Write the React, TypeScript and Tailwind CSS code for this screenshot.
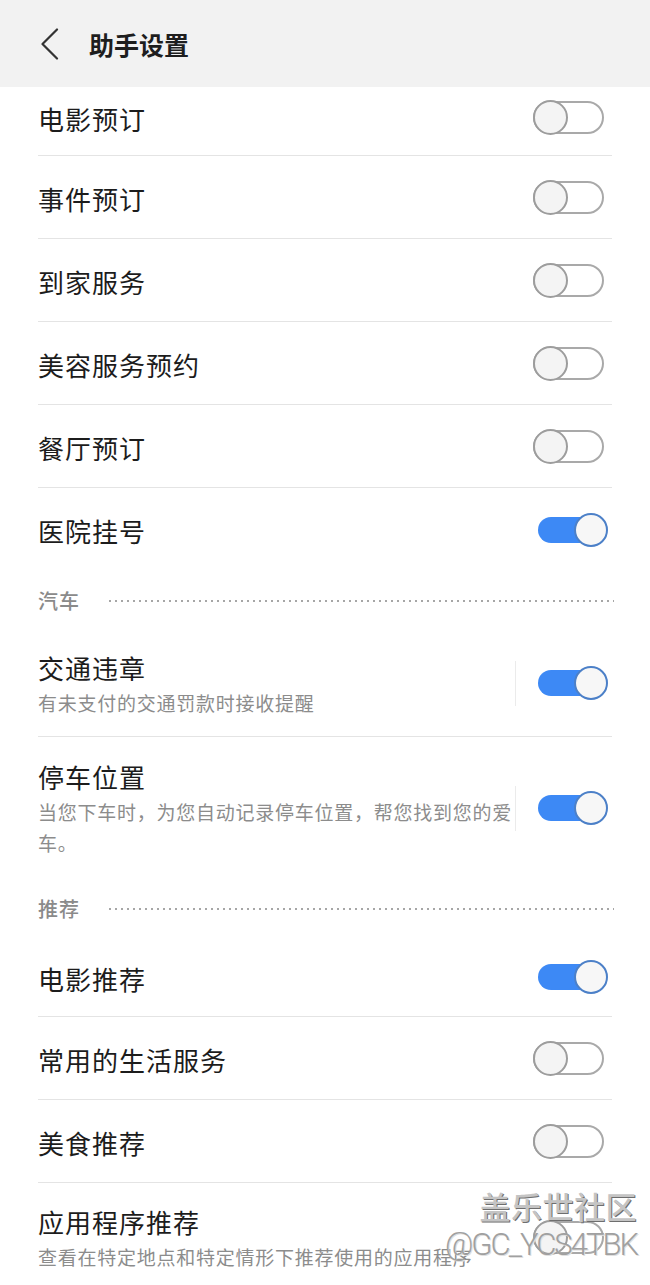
import React from "react";

const FONT = { fontFamily: '"Noto Sans CJK SC", "Noto Sans", sans-serif' };

function Toggle({ on }: { on: boolean }) {
  if (on) {
    return (
      <div className="relative w-[70px] h-[34px]">
        <div className="absolute left-0 top-[4px] w-[62px] h-[26px] rounded-full bg-[#3d89f5]" />
        <div className="absolute right-0 top-0 w-[34px] h-[34px] rounded-full border-2 border-[#4c80c8] bg-[#f7f7f7]" />
      </div>
    );
  }
  return (
    <div className="relative w-[71px] h-[35px]">
      <div className="absolute left-0 right-0 top-[1px] bottom-[1px] rounded-full border-2 border-[#a9a9a9] bg-white" />
      <div className="absolute left-0 top-0 w-[35px] h-[35px] rounded-full border-2 border-[#9d9d9d] bg-[#f4f4f4]" />
    </div>
  );
}

function ToggleBox({ on }: { on: boolean }) {
  return (
    <div className={`w-[75px] mr-[4px] flex ${on ? "justify-end" : "justify-start"}`}>
      <Toggle on={on} />
    </div>
  );
}

function Row({
  label,
  on,
  h,
  divider = true,
  extra = "",
}: {
  label: string;
  on: boolean;
  h: string;
  divider?: boolean;
  extra?: string;
}) {
  return (
    <div className="px-[38px]">
      <div
        className={`${h} ${extra} flex items-center justify-between ${
          divider ? "border-b border-[#e4e4e4]" : ""
        }`}
      >
        <span className="pt-[3px] text-[26px] tracking-[1px] text-[#1c1c1c] leading-[34px]">{label}</span>
        <ToggleBox on={on} />
      </div>
    </div>
  );
}

function SubRow({
  label,
  sub,
  on,
  h,
  divider = true,
  vline = true,
}: {
  label: string;
  sub: React.ReactNode;
  on: boolean;
  h: string;
  divider?: boolean;
  vline?: boolean;
}) {
  return (
    <div className="px-[38px]">
      <div
        className={`${h} flex items-center ${divider ? "border-b border-[#e4e4e4]" : ""}`}
      >
        <div className="w-[477px] flex flex-col pt-[2px]">
          <span className="text-[26px] tracking-[1px] text-[#1c1c1c] leading-[34px]">{label}</span>
          <span className="mt-[2px] text-[19px] tracking-[0.75px] text-[#8c8c8c] leading-[31px] whitespace-nowrap">
            {sub}
          </span>
        </div>
        <div className={`w-px h-[45px] ${vline ? "bg-[#ebebeb]" : ""}`} />
        <div className="ml-[17px]">
          <ToggleBox on={on} />
        </div>
      </div>
    </div>
  );
}

function Section({ label }: { label: string }) {
  return (
    <div className="h-[59px] pl-[38px] pr-[36px] flex items-center">
      <span className="text-[20px] tracking-[1px] font-medium text-[#8a8a8a] leading-[28px]">{label}</span>
      <div className="ml-[27px] flex-1 h-[4px] bg-[radial-gradient(circle,#a6a6a6_1px,transparent_1.5px)] bg-[length:6px_4px]" />
    </div>
  );
}

export default function App() {
  return (
    <div className="relative w-[650px] h-[1285px] overflow-hidden bg-white" style={FONT}>
      <div className="h-[87px] bg-[#f2f2f2] flex items-center">
        <svg className="ml-[38px]" width="22" height="32" viewBox="0 0 22 32">
          <path d="M19 1.5 L4.5 16 L19 30.5" fill="none" stroke="#333" strokeWidth="2.2" strokeLinecap="round" strokeLinejoin="round" />
        </svg>
        <span className="ml-[29px] text-[25px] font-bold text-[#1e1e1e] leading-[34px]">助手设置</span>
      </div>

      <Row label="电影预订" on={false} h="h-[69px]" extra="pb-[8px]" />
      <Row label="事件预订" on={false} h="h-[83px]" />
      <Row label="到家服务" on={false} h="h-[83px]" />
      <Row label="美容服务预约" on={false} h="h-[83px]" />
      <Row label="餐厅预订" on={false} h="h-[83px]" />
      <Row label="医院挂号" on={true} h="h-[83px]" divider={false} />

      <Section label="汽车" />
      <SubRow label="交通违章" sub="有未支付的交通罚款时接收提醒" on={true} h="h-[107px]" />
      <SubRow
        label="停车位置"
        sub={
          <>
            当您下车时，为您自动记录停车位置，帮您找到您的爱
            <br />
            车。
          </>
        }
        on={true}
        h="h-[142px]"
        divider={false}
      />

      <Section label="推荐" />
      <Row label="电影推荐" on={true} h="h-[79px]" />
      <Row label="常用的生活服务" on={false} h="h-[83px]" />
      <Row label="美食推荐" on={false} h="h-[83px]" />
      <SubRow
        label="应用程序推荐"
        sub="查看在特定地点和特定情形下推荐使用的应用程序"
        on={false}
        h="h-[108px]"
        divider={false}
        vline={false}
      />

      <div className="absolute right-[13px] top-[1187px] flex flex-col items-end pointer-events-none">
        <span className="text-[31px] leading-[38px] tracking-[0.5px] font-medium text-[#c4c4c4] [text-shadow:1px_1px_0_#6e6e6e,-1px_-1px_0_#ffffff]">
          盖乐世社区
        </span>
        <span
          className="mt-[1px] text-[31px] leading-[38px] font-light tracking-[-2px] text-[#a0a0a0] [text-shadow:1px_1px_0_#e0e0e0]"
          style={{ fontFamily: 'Roboto, "Noto Sans", sans-serif' }}
        >
          @GC_YCS4TBK
        </span>
      </div>
    </div>
  );
}
